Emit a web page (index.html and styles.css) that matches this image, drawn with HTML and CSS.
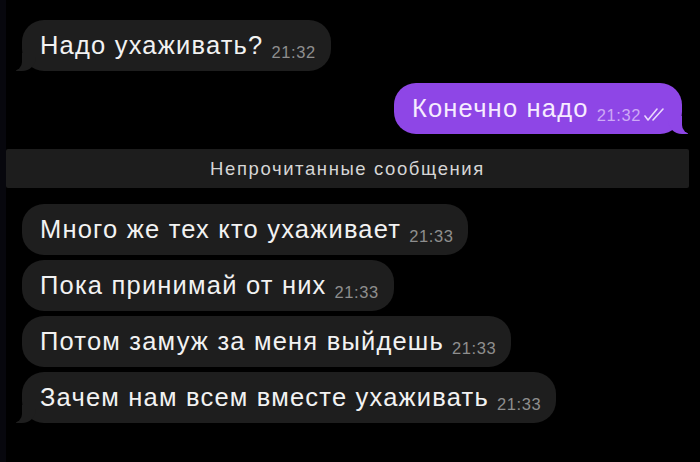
FILE: index.html
```html
<!DOCTYPE html>
<html lang="ru">
<head>
  <meta charset="UTF-8">
  <title>Чат</title>
  <link rel="stylesheet" href="styles.css">
</head>
<body>
  <div class="chat">
    <div class="row">
      <div class="bubble in tail">
        <span class="text">Надо ухаживать?</span>
        <span class="time">21:32</span>
      </div>
    </div>

    <div class="row out-row">
      <div class="bubble out tail">
        <span class="text">Конечно надо</span>
        <span class="time">21:32</span>
        <svg class="checks" width="24" height="14" viewBox="0 0 24 14">
          <polyline points="1,8 4,12 13,1" fill="none" stroke="currentColor" stroke-width="1.6" stroke-linecap="round" stroke-linejoin="round"/>
          <polyline points="9,12 19,1" fill="none" stroke="currentColor" stroke-width="1.6" stroke-linecap="round"/>
        </svg>
      </div>
    </div>

    <div class="divider">Непрочитанные сообщения</div>

    <div class="group">
      <div class="row">
        <div class="bubble in">
          <span class="text">Много же тех кто ухаживает</span>
          <span class="time">21:33</span>
        </div>
      </div>
      <div class="row">
        <div class="bubble in">
          <span class="text">Пока принимай от них</span>
          <span class="time">21:33</span>
        </div>
      </div>
      <div class="row">
        <div class="bubble in">
          <span class="text">Потом замуж за меня выйдешь</span>
          <span class="time">21:33</span>
        </div>
      </div>
      <div class="row">
        <div class="bubble in tail">
          <span class="text">Зачем нам всем вместе ухаживать</span>
          <span class="time">21:33</span>
        </div>
      </div>
    </div>
  </div>
</body>
</html>
```

FILE: styles.css
```css
body {
  margin: 0;
  background: #000;
  font-family: "Liberation Sans", Arial, sans-serif;
  height: 462px;
  overflow: hidden;
  border-left: 6px solid #07070d;
  box-sizing: border-box;
}
.chat {
  display: flex;
  flex-direction: column;
  padding-top: 20px;
}
.row {
  display: flex;
  padding-left: 16px;
}
.out-row {
  justify-content: flex-end;
  padding-left: 0;
  padding-right: 18px;
  margin-top: 12px;
}
.bubble {
  position: relative;
  height: 51px;
  box-sizing: border-box;
  padding: 0 15px 0 18px;
  border-radius: 22px;
  display: flex;
  align-items: center;
  white-space: nowrap;
}
.bubble .text {
  font-size: 25.5px;
  letter-spacing: 1.2px;
}
.bubble .time {
  font-size: 16.5px;
  letter-spacing: 0.6px;
  margin-left: 8px;
  position: relative;
  top: 7px;
}
.in {
  background: #1e1e1e;
  color: #f2f2f2;
}
.in .time {
  color: #8e8e8e;
}
.out {
  background: #8e46e6;
  color: #f6ecff;
  padding-right: 14px;
}
.out .time {
  color: #cda9f6;
}
.checks {
  color: #ead9fc;
  margin-left: 3px;
  position: relative;
  top: 6px;
}

/* хвостики у пузырей */
.in.tail::before {
  content: "";
  position: absolute;
  bottom: 0;
  left: -6px;
  width: 20px;
  height: 18px;
  background: #1e1e1e;
  border-bottom-right-radius: 14px;
}
.in.tail::after {
  content: "";
  position: absolute;
  bottom: 0;
  left: -10px;
  width: 10px;
  height: 18px;
  background: #000;
  border-bottom-right-radius: 9px;
}
.out.tail::before {
  content: "";
  position: absolute;
  bottom: 0;
  right: -6px;
  width: 20px;
  height: 18px;
  background: #8e46e6;
  border-bottom-left-radius: 14px;
}
.out.tail::after {
  content: "";
  position: absolute;
  bottom: 0;
  right: -10px;
  width: 10px;
  height: 18px;
  background: #000;
  border-bottom-left-radius: 9px;
}

.divider {
  margin: 15px 11px 0 0;
  height: 39px;
  background: #1d1d1d;
  color: #d6d6d6;
  font-size: 18.5px;
  letter-spacing: 1.6px;
  display: flex;
  align-items: center;
  justify-content: center;
  border-radius: 2px;
}
.group {
  display: flex;
  flex-direction: column;
  gap: 5px;
  margin-top: 16px;
}
```
